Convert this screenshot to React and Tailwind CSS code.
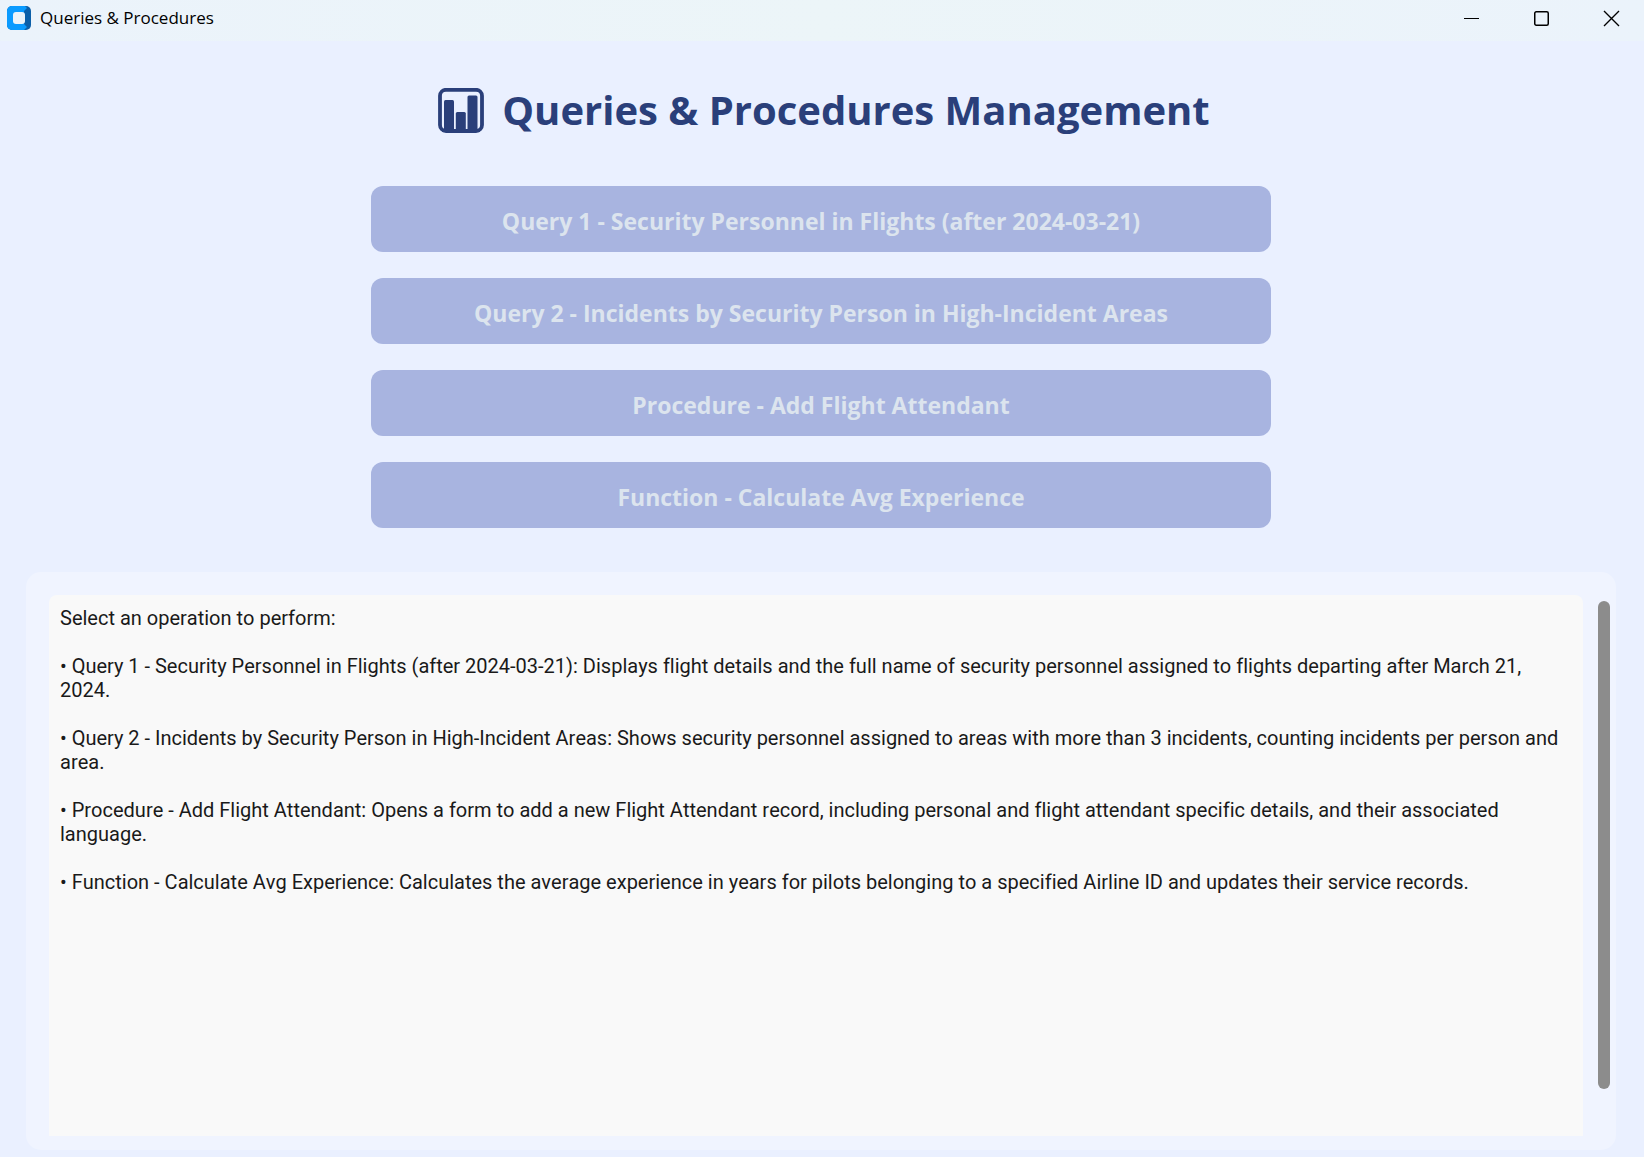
const OPERATIONS = [
  {
    label: "Query 1 - Security Personnel in Flights (after 2024-03-21)",
    description:
      "Displays flight details and the full name of security personnel assigned to flights departing after March 21, 2024.",
  },
  {
    label: "Query 2 - Incidents by Security Person in High-Incident Areas",
    description:
      "Shows security personnel assigned to areas with more than 3 incidents, counting incidents per person and area.",
  },
  {
    label: "Procedure - Add Flight Attendant",
    description:
      "Opens a form to add a new Flight Attendant record, including personal and flight attendant specific details, and their associated language.",
  },
  {
    label: "Function - Calculate Avg Experience",
    description:
      "Calculates the average experience in years for pilots belonging to a specified Airline ID and updates their service records.",
  },
];

const HELP_TEXT = [
  "Select an operation to perform:",
  ...OPERATIONS.map((o) => `• ${o.label}: ${o.description}`),
].join("\n\n");

function AppIcon() {
  return (
    <svg width="24" height="24" viewBox="0 0 24 24" aria-hidden="true">
      <rect width="24" height="24" rx="5" fill="#0b5fa8" />
      <path d="M5 0H18L20 2L17 5V18L20 21L17 24H5A5 5 0 0 1 0 19V5A5 5 0 0 1 5 0Z" fill="#0a9bff" />
      <rect x="6" y="6" width="12" height="12" rx="3" fill="#ecf4fa" />
    </svg>
  );
}

function ChartIcon() {
  return (
    <svg width="46" height="45" viewBox="0 0 46 45" aria-hidden="true">
      <rect x="2" y="1.8" width="42" height="41.2" rx="6" fill="none" stroke="#2a3f7a" strokeWidth="3.8" />
      <rect x="6" y="12" width="10" height="30" rx="1.5" fill="#2a3f7a" />
      <rect x="17.8" y="24" width="10" height="18" rx="1.5" fill="#2a3f7a" />
      <rect x="29.5" y="7.5" width="10" height="34.5" rx="1.5" fill="#2a3f7a" />
      <rect x="4" y="41" width="38" height="3" fill="#2a3f7a" />
    </svg>
  );
}

function WindowButton({ label, children }) {
  return (
    <button type="button" aria-label={label} className="flex h-full w-[66px] items-center justify-center">
      <svg width="17" height="17" viewBox="0 0 17 17" fill="none" stroke="#000" aria-hidden="true">
        {children}
      </svg>
    </button>
  );
}

function TitleBar() {
  return (
    <header className="flex h-[41px] shrink-0 items-center bg-[#ecf4fa] bg-linear-to-r from-[#ebf3fb] via-[#ecf5f8] to-[#ebf3fb] pb-[5px] pl-[7px]">
      <AppIcon />
      <span className="ml-[9px] flex-1 font-['Open_Sans','Noto_Sans',sans-serif] text-[17px] leading-6 text-black">
        Queries &amp; Procedures
      </span>
      <div className="flex h-full gap-1">
        <WindowButton label="Minimize">
          <path d="M1 8.5H16" />
        </WindowButton>
        <WindowButton label="Maximize">
          <rect x="1.75" y="1.75" width="13.5" height="13.5" rx="1.5" strokeWidth="1.5" />
        </WindowButton>
        <WindowButton label="Close">
          <path d="M1 1L16 16M16 1L1 16" strokeWidth="1.4" />
        </WindowButton>
      </div>
    </header>
  );
}

export default function App() {
  return (
    <div className="flex min-h-screen flex-col bg-[#eaf0ff]">
      <TitleBar />
      <main className="flex flex-1 flex-col pt-10 pr-7 pb-[7px] pl-[26px]">
        <h1 className="flex items-center justify-center gap-[18px] pl-1.5 font-['Open_Sans','Noto_Sans',sans-serif] text-[40px] leading-[58px] font-bold text-[#2a3f7a]">
          <ChartIcon />
          Queries &amp; Procedures Management
        </h1>

        <div className="mx-auto mt-[47px] flex w-full max-w-[900px] flex-col gap-[26px]">
          {OPERATIONS.map((o) => (
            <button
              key={o.label}
              type="button"
              className="h-[66px] rounded-xl bg-[#a8b4e0] pt-1 font-['Open_Sans','Noto_Sans',sans-serif] text-[23px] leading-8 font-bold text-[#dce4ee]"
            >
              {o.label}
            </button>
          ))}
        </div>

        <section className="mt-11 flex flex-1 rounded-[15px] bg-[#f0f4ff] pt-[23px] pr-1.5 pb-3.5 pl-[23px]">
          <textarea
            readOnly
            aria-label="Operation details"
            value={HELP_TEXT}
            className="flex-1 resize-none overflow-hidden rounded-t-lg bg-[#f9f9f9] px-[11px] pt-[11px] font-[Roboto,sans-serif] text-[20px] leading-6 text-[#1a1a1a] outline-none [font-kerning:none] [font-variant-ligatures:none]"
          />
          <div className="ml-[15px] flex w-3 flex-col pt-1.5 pb-[47px]">
            <div className="flex-1 rounded-full bg-[#8c8c8c]" />
          </div>
        </section>
      </main>
    </div>
  );
}
